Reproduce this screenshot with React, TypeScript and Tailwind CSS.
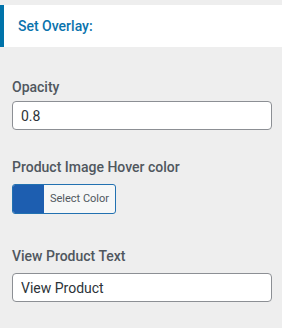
export default function App() {
  return (
    <div className="w-[282px] h-[328px] bg-[#eeeeee] pt-[5px] font-['Roboto',sans-serif]">
      <div className="h-[42px] bg-white border-l-4 border-[#0073aa] flex items-center pl-[14px]">
        <h3 className="text-[14px] font-medium text-[#0a73ad]">Set Overlay:</h3>
      </div>

      <div className="px-3 pt-[30px]">
        <label className="block text-[14px] font-medium text-[#50575e] leading-5">Opacity</label>
        <input
          type="text"
          defaultValue="0.8"
          className="mt-[4px] w-[260px] h-[29px] px-2 bg-white border border-[#8c8f94] rounded-[4px] text-[14px] text-[#2c3338] outline-none"
        />

        <label className="block mt-[27px] text-[14px] font-medium text-[#50575e] leading-5">
          Product Image Hover color
        </label>
        <button className="mt-[7px] flex h-[30px] w-[104px] border border-[#2271b1] rounded-[3px] overflow-hidden bg-[#f6f7f7]">
          <span className="w-[31px] h-full bg-[#1d5eb0]" />
          <span className="flex-1 flex items-center justify-center text-[11px] text-[#50575e]">Select Color</span>
        </button>

        <label className="block mt-[32px] text-[14px] font-medium text-[#50575e] leading-5">View Product Text</label>
        <input
          type="text"
          defaultValue="View Product"
          className="mt-[7px] w-[260px] h-[29px] px-2 bg-white border border-[#8c8f94] rounded-[4px] text-[14px] text-[#2c3338] outline-none"
        />
      </div>
    </div>
  );
}
